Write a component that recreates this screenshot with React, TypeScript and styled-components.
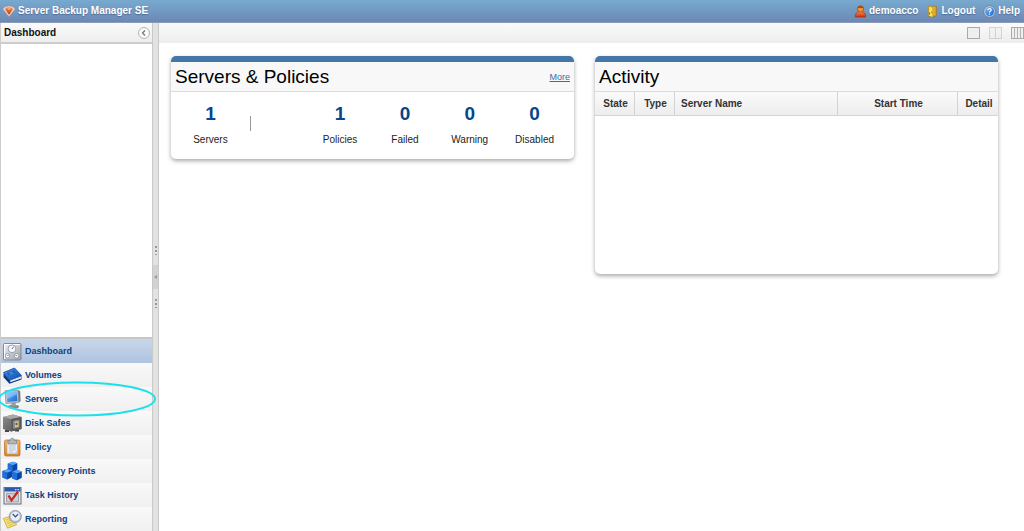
import React from "react";
import styled, { createGlobalStyle, css } from "styled-components";

const GlobalStyle = createGlobalStyle`
  *, *::before, *::after { box-sizing: border-box; }
  body { margin: 0; background: #fff; font: 10px/12px "Liberation Sans", Arial, Helvetica, sans-serif; color: #222; }
  button { font: inherit; color: inherit; border: 0; background: none; padding: 0; cursor: pointer; }
  h1, h2, dl, dd { margin: 0; }
  svg { display: block; }
`;

const Page = styled.div`
  display: flex;
  flex-direction: column;
  min-height: 100vh;
`;

const TopBar = styled.header`
  display: flex;
  align-items: center;
  justify-content: space-between;
  height: 23px;
  padding: 0 4px 0 2px;
  color: #fff;
  background: linear-gradient(#78a9ce, #6c88b4);
  border-bottom: 1px solid #8b9cb9;
`;

const Brand = styled.h1`
  display: flex;
  align-items: center;
  gap: 2px;
  font-size: 10px;
  line-height: 12px;
  text-shadow: 0 1px 1px #4d6c96;
`;

const Account = styled.nav`
  display: flex;
  gap: 8px;
`;

const AccountLink = styled.a`
  display: flex;
  align-items: center;
  gap: 2px;
  font-weight: bold;
  color: #fff;
  text-decoration: none;
  text-shadow: 0 1px 1px #4d6c96;
`;

const Body = styled.div`
  display: flex;
  flex: 1;
`;

const Sidebar = styled.aside`
  display: flex;
  flex-direction: column;
  width: 152px;
  border-left: 1px solid #ccc;
`;

const barFill = css`
  background: linear-gradient(#fbfbfb, #ededed);
`;

const SideTitle = styled.div`
  display: flex;
  align-items: center;
  justify-content: space-between;
  height: 21px;
  padding: 0 2px 0 3px;
  border-bottom: 2px solid #ccc;
  ${barFill}
`;

const SideHeading = styled.h2`
  font-size: 10px;
  line-height: 12px;
  color: #111;
`;

const SideContent = styled.div`
  flex: 1;
`;

const NavList = styled.nav`
  border-top: 2px solid #c6c6c6;
`;

const NavLink = styled.a<{ $active?: boolean }>`
  position: relative;
  display: flex;
  align-items: center;
  gap: 3px;
  height: 24px;
  padding-left: 1px;
  font-size: 9px;
  font-weight: bold;
  color: #0b4180;
  text-decoration: none;
  background: ${(p) =>
    p.$active ? "linear-gradient(#c9d7ea, #aec3e1)" : "linear-gradient(#f9f9f9, #f0f0f0)"};
`;

const Marker = styled.svg`
  position: absolute;
  z-index: 2;
  top: -6px;
  left: -2px;
  pointer-events: none;
`;

const Splitter = styled.div`
  display: flex;
  flex-direction: column;
  align-items: center;
  justify-content: center;
  gap: 10px;
  width: 7px;
  background: #e2e2e2;
  border: solid #c8c8c8;
  border-width: 0 1px;
`;

const Grip = styled.span`
  height: 9px;
  width: 2px;
  background: repeating-linear-gradient(#999 0 2px, transparent 2px 4px);
`;

const SplitButton = styled.button`
  width: 5px;
  height: 24px;
  background: #d2d2d2;
`;

const Main = styled.main`
  flex: 1;
  min-width: 0;
`;

const Toolbar = styled.div`
  display: flex;
  align-items: center;
  justify-content: flex-end;
  gap: 9px;
  height: 20px;
  ${barFill}
`;

const LayoutButton = styled.button<{ $faded?: boolean }>`
  opacity: ${(p) => (p.$faded ? 0.45 : 1)};
`;

const Board = styled.div`
  display: grid;
  grid-template-columns: 1fr 1fr;
  align-items: start;
  gap: 21px;
  padding: 13px 26px 13px 12px;
`;

const Card = styled.section`
  overflow: hidden;
  background: #fff;
  border-top: 6px solid #4477a8;
  border-radius: 5px;
  box-shadow: 0 2px 4px #a8a8a8;
`;

const CardHead = styled.div`
  display: flex;
  align-items: center;
  justify-content: space-between;
  height: 30px;
  padding: 0 4px;
  background: #f8f8f8;
  border-bottom: 1px solid #dcdcdc;
`;

const CardTitle = styled.h2`
  font-size: 19px;
  line-height: 24px;
  font-weight: normal;
  color: #000;
`;

const MoreLink = styled.a`
  font-size: 9px;
  color: #3b6ea5;
`;

const Stats = styled.dl`
  display: grid;
  grid-template-columns: repeat(6, 1fr);
  height: 67px;
  padding: 10px 7px 0;
  text-align: center;
`;

const Stat = styled.div`
  display: flex;
  flex-direction: column-reverse;
  justify-content: flex-end;
  gap: 8px;
`;

const StatValue = styled.dd`
  font-size: 19px;
  line-height: 24px;
  font-weight: bold;
  color: #05468c;
`;

const Divider = styled.div`
  width: 1px;
  height: 15px;
  margin: 14px 0 0 7px;
  background: #999;
`;

const ActivityBody = styled.div`
  min-height: 182px;
`;

const Table = styled.table`
  width: 100%;
  table-layout: fixed;
  border-spacing: 0;
`;

const Th = styled.th<{ $width?: number; $left?: boolean }>`
  width: ${(p) => (p.$width ? `${p.$width}px` : "auto")};
  height: 24px;
  padding: 0 0 0 ${(p) => (p.$left ? 6 : 2)}px;
  text-align: ${(p) => (p.$left ? "left" : "center")};
  color: #333;
  background: linear-gradient(#fafafa, #ededed);
  border: solid #d4d4d4;
  border-width: 0 1px 1px 0;
  &:last-child { border-right: 0; }
`;

const Icon = ({ size = 20, children }: { size?: number; children: React.ReactNode }) => (
  <svg width={size} height={size} viewBox="0 0 20 20" aria-hidden="true">{children}</svg>
);

const GradientSheet = styled.svg`
  position: absolute;
`;

const Gradients = () => (
  <GradientSheet width="0" height="0" aria-hidden="true">
    <defs>
      <linearGradient id="blue" x2="1" y2="1"><stop stopColor="#7cc0ff" /><stop offset="1" stopColor="#1264d0" /></linearGradient>
      <linearGradient id="cover" x2="1" y2="1"><stop stopColor="#3f8fe6" /><stop offset="1" stopColor="#0d4fb4" /></linearGradient>
      <linearGradient id="steel" x2="1" y2="1"><stop stopColor="#f4f4f4" /><stop offset="1" stopColor="#9a9fa8" /></linearGradient>
      <linearGradient id="dark" x2="1" y2="1"><stop stopColor="#8d8d8d" /><stop offset="1" stopColor="#505050" /></linearGradient>
      <linearGradient id="orange" x2="0" y2="1"><stop stopColor="#f2b36a" /><stop offset="1" stopColor="#dd8125" /></linearGradient>
      <linearGradient id="gold" x2="1" y2="0"><stop stopColor="#ffe27a" /><stop offset="1" stopColor="#e2960a" /></linearGradient>
      <linearGradient id="red" x2="0" y2="1"><stop stopColor="#ff8a45" /><stop offset="1" stopColor="#c22f10" /></linearGradient>
    </defs>
  </GradientSheet>
);

const DashboardIcon = () => (
  <Icon>
    <rect x="1.5" y="2.5" width="17.5" height="16.5" rx="1" fill="url(#steel)" stroke="#85898f" />
    <path d="M2.5 18V3.5H18" stroke="#fff" fill="none" />
    <circle cx="10" cy="7.8" r="3.900" fill="#f6f8fb" stroke="#9aa1aa" />
    <path d="M10 8 11.500 5.800" stroke="#5176a5" />
    <circle cx="5.6" cy="14.800" r="2.300" fill="#f6f8fb" stroke="#9aa1aa" />
    <circle cx="14.600" cy="14.800" r="2.300" fill="#f6f8fb" stroke="#9aa1aa" />
    <path d="m5.600 15 .8-1.200M14.600 15l-.8-1.200" stroke="#5176a5" />
  </Icon>
);
const VolumesIcon = () => (
  <Icon>
    <path d="M1.500 8v4.200L7.500 18.800 19.500 14.500v-3.500L8 15z" fill="#0b3a86" />
    <path d="m8.200 15.300 10.800-3.800v2L8.200 17.300z" fill="#e3ebf6" />
    <path d="M1.500 7.500 12.500 3l7 7.500-11.300 4.400z" fill="url(#cover)" stroke="#1253ad" strokeWidth=".8" />
    <path d="m5.200 8.200 6.300-2.500 1.800 1.900-6.300 2.500z" fill="#1a50a8" />
    <path d="m6.800 8.400 4.200-1.600M7.800 9.300l4-1.500" stroke="#7fb2ee" strokeWidth=".6" />
  </Icon>
);
const ServersIcon = () => (
  <Icon>
    <ellipse cx="11.5" cy="17.700" rx="5.500" ry="1.900" fill="#84878c" />
    <path d="M9.500 13h4l.6 4h-5z" fill="#999da3" />
    <path d="M3 1.800 16 1l.8 12.300L4 14.500z" fill="#c3c7cc" stroke="#8d9095" strokeWidth=".8" />
    <path d="m16 1 2.200 1.200.4 10-1.800 1.100z" fill="#77797e" />
    <path d="m4.500 3.200 10.200-.6.700 9.500-10 .9z" fill="url(#blue)" />
    <path d="m4.500 3.200 10.200-.6.100 2.700L5 10z" fill="#9bd0ff" opacity=".6" />
  </Icon>
);
const DiskSafesIcon = () => (
  <Icon>
    <path d="M3 17h4v2H3zM13 16.500h4v2H13z" fill="#444" />
    <path d="M1 4 11 1.500 19.500 4v12L9 18.500 1 16z" fill="url(#dark)" />
    <path d="M1 4 11 1.500 19.500 4 9 6z" fill="#a9a9a9" />
    <path d="M9 6v12.500L19.500 16V4z" fill="#5e5e5e" />
    <path d="m10.700 7.600 7.200-1.500v8.600l-7.200 1.800z" fill="#8f8f8f" stroke="#4c4c4c" strokeWidth=".7" />
    <path d="M13 8.400h3.400v5L13 14.200z" fill="#d8cc95" />
    <circle cx="14.500" cy="11" r="1.200" fill="#6d6017" />
  </Icon>
);
const PolicyIcon = () => (
  <Icon>
    <rect x="2.500" y="3" width="15.500" height="16" rx="1.500" fill="url(#orange)" stroke="#c0792c" strokeWidth=".8" />
    <path d="M5 5.300h10.500v11.500H5z" fill="#eff3f9" stroke="#a4adba" strokeWidth=".6" />
    <path d="M6.800 9h7M6.800 11h7M6.800 13h7M6.800 15h4.500" stroke="#a3b0c4" strokeWidth=".8" />
    <path d="M6 3.400h2.300C8.300.5 12.300.5 12.300 3.400h2.300V7H6z" fill="#b1b4b8" stroke="#7b7e83" strokeWidth=".7" />
    <path d="m11.800 16.800 3.700-3.500v3.500z" fill="#bfc9d8" />
  </Icon>
);
const RecoveryIcon = () => (
  <Icon>
    {[[10.5, 5.5], [5.2, 13], [15, 13.8]].map(([x, y]) => (
      <g key={x} transform={`translate(${x} ${y})`}>
        <path d="m-4.700-3 5-1.800 4.500 1.500v6.200L.2 5.400l-4.900-1.800z" fill="#0a45a8" />
        <path d="m-4.700-3 5-1.800 4.500 1.500L0-1.200z" fill="#5ba3f7" />
        <path d="M-4.700-3 0-1.200v6.600l-4.700-1.800z" fill="#216fdc" />
      </g>
    ))}
  </Icon>
);
const HistoryIcon = () => (
  <Icon>
    <rect x="2" y="2.500" width="17" height="16.500" fill="#e6e8ec" stroke="#666b74" />
    <path d="M2.500 3h16v3.500h-16z" fill="#2c59ad" />
    <path d="M13 4.700h1.500M15.500 4.700H17" stroke="#fff" />
    <path d="M4.500 8.300h12v8.700h-12z" fill="#c9ced8" stroke="#8b93a1" strokeWidth=".8" />
    <path d="m6.500 10.500 3 4.800L16 6.500" fill="none" stroke="#cb2418" strokeWidth="2.200" />
  </Icon>
);
const ReportingIcon = () => (
  <Icon>
    <path d="m1.300 9.500 8-2.500 5.300 8.700-9 3.500z" fill="#f7e37b" stroke="#c6a52f" strokeWidth=".8" />
    <path d="m3.500 11 6-2M4.500 13l6.300-2.300M5.300 15l6.500-2.600M6.300 17l6.200-2.600" stroke="#cbae45" strokeWidth=".7" />
    <circle cx="13.300" cy="7.500" r="6.100" fill="#b7c0cd" stroke="#8a94a3" strokeWidth=".8" />
    <circle cx="13.300" cy="7.300" r="4.500" fill="#e8f1ff" />
    <path d="m10.700 5 2.700 2.800 2.700-2.600" fill="none" stroke="#34528a" strokeWidth="1.200" />
  </Icon>
);

const BrandIcon = () => (
  <Icon size={14}>
    <path d="M.8 7.500C2 4 6 2.500 10 2.500s8 1.500 9.200 5L10 18.500z" fill="#d9d0cd" stroke="#8b7c80" strokeWidth=".8" />
    <path d="m4.500 7.500 2.500-2.500h6l2.500 2.500-5.500 8z" fill="url(#red)" />
    <path d="M7.500 6h5L10 9z" fill="#ffb193" />
  </Icon>
);
const UserIcon = () => (
  <Icon size={13}>
    <path d="M2 18.500c0-6 2.500-8.500 8-8.500s8 2.500 8 8.500z" fill="url(#red)" stroke="#9d2f0c" />
    <circle cx="10" cy="6" r="4.800" fill="#e9953f" stroke="#8f4515" />
    <path d="M5.500 5C6.500.5 13.500.5 14.500 5 12 3.800 8 3.800 5.500 5z" fill="#99461a" />
  </Icon>
);
const LogoutIcon = () => (
  <Icon size={13}>
    <path d="M4 2h12v15H4z" fill="url(#gold)" stroke="#96701b" strokeWidth=".8" />
    <path d="m4 2 6.500 1.500v15.500L4 17z" fill="#ffdf5c" stroke="#a57a12" strokeWidth=".8" />
    <circle cx="8.800" cy="11" r=".9" fill="#7a5a0d" />
    <path d="M4.500 10.500 7 13l-2.500 2.500z" fill="#3e9c32" />
  </Icon>
);
const HelpIcon = () => (
  <Icon size={13}>
    <circle cx="10" cy="10" r="8.800" fill="#c9d4e2" stroke="#5f7087" />
    <circle cx="10" cy="10" r="7" fill="url(#blue)" />
    <path d="M7.500 8c0-3.500 5.300-3 5 0-.2 1.700-2.500 1.600-2.500 3.500M10 13v2" fill="none" stroke="#fff" strokeWidth="1.800" />
  </Icon>
);

const LayoutIcon = ({ columns }: { columns: number }) => (
  <svg width="13" height="12" viewBox="0 0 13 12" aria-hidden="true">
    <rect x=".5" y=".5" width="12" height="11" fill="#efefef" stroke="#aaa" />
    {columns === 2 && <path d="M6.500 1v10" stroke="#aaa" />}
    {columns === 3 && <path d="M3.500 1v10M6.500 1v10M9.500 1v10" stroke="#b4b4b4" />}
  </svg>
);

const navItems = [
  { label: "Dashboard", icon: <DashboardIcon />, active: true },
  { label: "Volumes", icon: <VolumesIcon /> },
  { label: "Servers", icon: <ServersIcon />, marked: true },
  { label: "Disk Safes", icon: <DiskSafesIcon /> },
  { label: "Policy", icon: <PolicyIcon /> },
  { label: "Recovery Points", icon: <RecoveryIcon /> },
  { label: "Task History", icon: <HistoryIcon /> },
  { label: "Reporting", icon: <ReportingIcon /> },
];

const StatItem = ({ label, value }: { label: string; value: number }) => (
  <Stat>
    <dt>{label}</dt>
    <StatValue>{value}</StatValue>
  </Stat>
);

export default function App() {
  return (
    <Page>
      <GlobalStyle />
      <Gradients />
      <TopBar>
        <Brand><BrandIcon />Server Backup Manager SE</Brand>
        <Account aria-label="Account">
          <AccountLink href="#account"><UserIcon />demoacco</AccountLink>
          <AccountLink href="#logout"><LogoutIcon />Logout</AccountLink>
          <AccountLink href="#help"><HelpIcon />Help</AccountLink>
        </Account>
      </TopBar>
      <Body>
        <Sidebar>
          <SideTitle>
            <SideHeading>Dashboard</SideHeading>
            <button type="button" aria-label="Collapse sidebar">
              <svg width="12" height="12" viewBox="0 0 12 12">
                <circle cx="6" cy="6" r="5.500" fill="#fafafa" stroke="#b4b4b4" />
                <path d="M7 3.500 4.500 6 7 8.500" fill="none" stroke="#777" strokeWidth="1.300" />
              </svg>
            </button>
          </SideTitle>
          <SideContent />
          <NavList aria-label="Sections">
            {navItems.map((item) => (
              <NavLink key={item.label} href="#section" $active={item.active}>
                {item.icon}
                {item.label}
                {item.marked && (
                  <Marker width="158" height="36" viewBox="0 0 158 36" aria-hidden="true">
                    <ellipse cx="78" cy="18" rx="78" ry="16.500" fill="none" stroke="#1fe0ea" strokeWidth="2" />
                  </Marker>
                )}
              </NavLink>
            ))}
          </NavList>
        </Sidebar>
        <Splitter>
          <Grip />
          <SplitButton type="button" aria-label="Toggle sidebar">
            <svg width="5" height="24" viewBox="0 0 5 24"><path d="M4 10v4L1 12z" fill="#999" /></svg>
          </SplitButton>
          <Grip />
        </Splitter>
        <Main>
          <Toolbar>
            <LayoutButton type="button" aria-label="One column"><LayoutIcon columns={1} /></LayoutButton>
            <LayoutButton type="button" aria-label="Two columns" $faded><LayoutIcon columns={2} /></LayoutButton>
            <LayoutButton type="button" aria-label="Three columns"><LayoutIcon columns={3} /></LayoutButton>
          </Toolbar>
          <Board>
            <Card>
              <CardHead>
                <CardTitle>Servers &amp; Policies</CardTitle>
                <MoreLink href="#more">More</MoreLink>
              </CardHead>
              <Stats>
                <StatItem label="Servers" value={1} />
                <Divider />
                <StatItem label="Policies" value={1} />
                <StatItem label="Failed" value={0} />
                <StatItem label="Warning" value={0} />
                <StatItem label="Disabled" value={0} />
              </Stats>
            </Card>
            <Card>
              <CardHead><CardTitle>Activity</CardTitle></CardHead>
              <ActivityBody>
                <Table>
                  <thead>
                    <tr>
                      <Th $width={40}>State</Th>
                      <Th $width={40}>Type</Th>
                      <Th $left>Server Name</Th>
                      <Th $width={120}>Start Time</Th>
                      <Th $width={40}>Detail</Th>
                    </tr>
                  </thead>
                  <tbody />
                </Table>
              </ActivityBody>
            </Card>
          </Board>
        </Main>
      </Body>
    </Page>
  );
}
